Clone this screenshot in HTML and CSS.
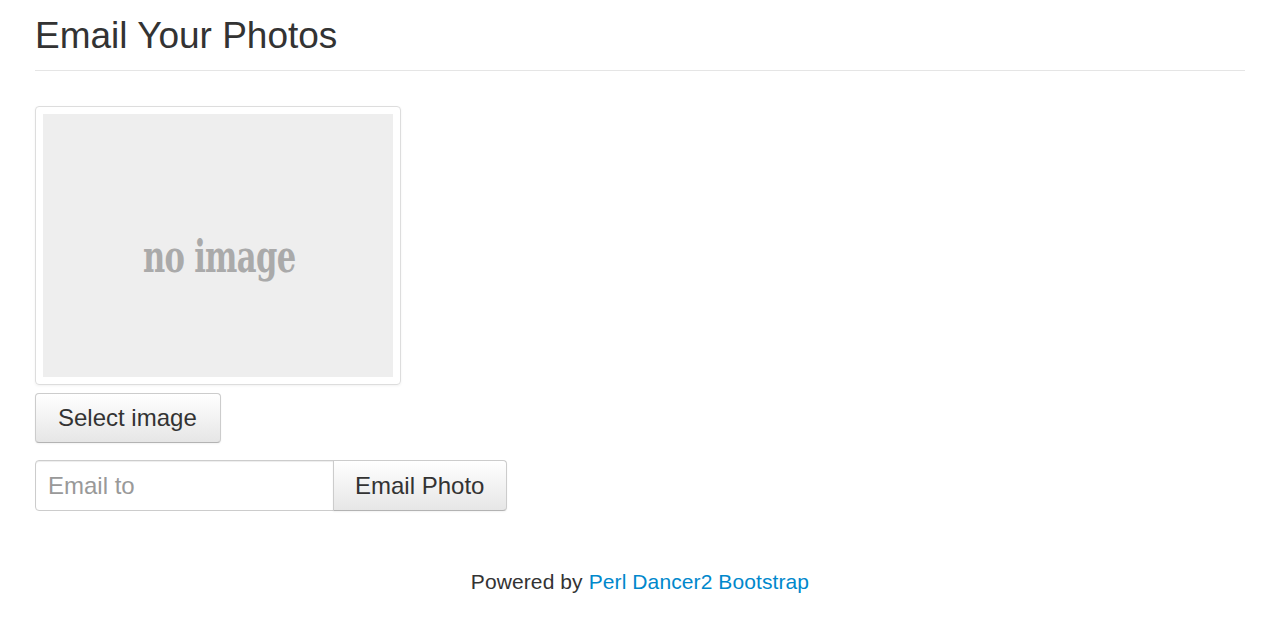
FILE: index.html
```html
<!DOCTYPE html>
<html lang="en">
<head>
    <meta charset="UTF-8">
    <meta name="viewport" content="width=device-width, initial-scale=1.0">
    <title>Email Your Photos</title>
    <link rel="stylesheet" href="styles.css">
</head>
<body>
    <div class="container">
        <div class="page-header">
            <h1>Email Your Photos</h1>
        </div>

        <div class="thumbnail">
            <div class="no-image"><span>no image</span></div>
        </div>

        <button class="btn select-btn">Select image</button>

        <div class="input-group">
            <input class="email-input" type="text" placeholder="Email to">
            <button class="btn email-btn">Email Photo</button>
        </div>

        <footer class="footer">
            Powered by <a href="#">Perl Dancer2 Bootstrap</a>
        </footer>
    </div>
</body>
</html>
```

FILE: styles.css
```css
body {
    font-family: "Liberation Sans", Arial, sans-serif;
    color: #333;
    margin: 0;
}
.container {
    padding: 16px 35px 0;
}
.page-header {
    border-bottom: 1px solid #e5e5e5;
    padding-bottom: 14px;
}
h1 {
    margin: 0;
    font-size: 37px;
    font-weight: normal;
    line-height: 40px;
}
.thumbnail {
    margin-top: 35px;
    width: 350px;
    padding: 7px;
    border: 1px solid #ddd;
    border-radius: 4px;
    box-shadow: 0 1px 3px rgba(0, 0, 0, 0.055);
}
.no-image {
    height: 263px;
    box-sizing: border-box;
    padding: 22px 0 0 2px;
    background-color: #eee;
    color: #aaa;
    display: flex;
    align-items: center;
    justify-content: center;
    font-family: "DejaVu Serif", serif;
    font-weight: bold;
    font-size: 45px;
}
.no-image span {
    display: inline-block;
    transform: scaleX(0.68);
    letter-spacing: -1px;
}
.btn {
    font-family: "Liberation Sans", Arial, sans-serif;
    font-size: 24px;
    line-height: 28px;
    color: #333;
    padding: 10px 22px;
    background-color: #f5f5f5;
    background-image: linear-gradient(to bottom, #ffffff, #e6e6e6);
    border: 1px solid #ccc;
    border-bottom-color: #b3b3b3;
    border-radius: 4px;
    box-shadow: inset 0 1px 0 rgba(255, 255, 255, 0.2), 0 1px 2px rgba(0, 0, 0, 0.05);
    cursor: pointer;
}
.select-btn {
    display: block;
    height: 50px;
    margin-top: 8px;
    padding-right: 23px;
}
.input-group {
    display: flex;
    margin-top: 17px;
}
.email-input {
    width: 299px;
    height: 51px;
    box-sizing: border-box;
    padding: 10px 12px;
    font-family: "Liberation Sans", Arial, sans-serif;
    font-size: 24px;
    color: #555;
    border: 1px solid #ccc;
    border-radius: 4px 0 0 4px;
    box-shadow: inset 0 1px 1px rgba(0, 0, 0, 0.075);
    outline: none;
}
.email-input::placeholder {
    color: #999;
}
.email-btn {
    height: 51px;
    margin-left: -1px;
    padding: 10px 22px 10px 21px;
    border-radius: 0 4px 4px 0;
}
.footer {
    margin-top: 57px;
    text-align: center;
    font-size: 21px;
    line-height: 28px;
    letter-spacing: 0.1px;
}
.footer a {
    color: #0088cc;
    text-decoration: none;
}
```
